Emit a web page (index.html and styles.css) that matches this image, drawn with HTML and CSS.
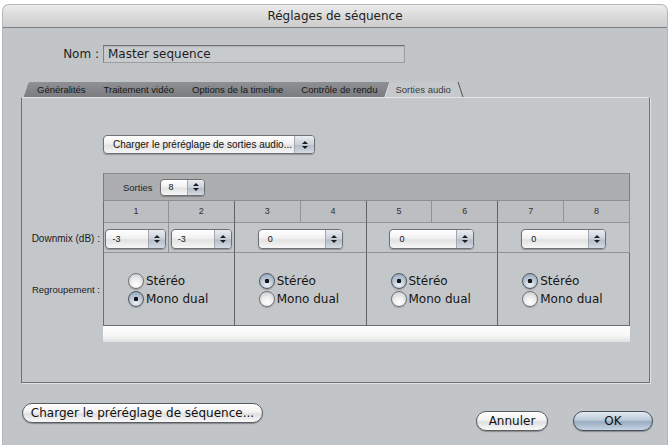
FILE: index.html
```html
<!DOCTYPE html>
<html lang="fr">
<head>
    <meta charset="UTF-8">
    <meta name="viewport" content="width=device-width, initial-scale=1.0">
    <title>Réglages de séquence</title>
    <link rel="stylesheet" href="styles.css">
</head>
<body>
    <div class="window">
        <div class="titlebar">Réglages de séquence</div>

        <div class="name-row">
            <label class="name-label">Nom :</label>
            <div class="name-field">Master sequence</div>
        </div>

        <div class="tabs">
            <div class="tab">Généralités</div>
            <div class="tab">Traitement vidéo</div>
            <div class="tab">Options de la timeline</div>
            <div class="tab">Contrôle de rendu</div>
            <div class="tab active">Sorties audio</div>
        </div>

        <div class="panel">
            <div class="preset-row">
                <div class="popup popup-preset">
                    <span class="popup-value">Charger le préréglage de sorties audio...</span>
                    <span class="popup-arrows"></span>
                </div>
            </div>

            <div class="outputs">
                <!-- header: number of outputs -->
                <div class="spacer"></div>
                <div class="outputs-head">
                    <span class="head-label">Sorties</span>
                    <div class="popup popup-count">
                        <span class="popup-value">8</span>
                        <span class="popup-arrows"></span>
                    </div>
                </div>

                <!-- channel numbers -->
                <div class="spacer"></div>
                <div class="channel first">1</div>
                <div class="channel group-end">2</div>
                <div class="channel">3</div>
                <div class="channel group-end">4</div>
                <div class="channel">5</div>
                <div class="channel group-end">6</div>
                <div class="channel">7</div>
                <div class="channel">8</div>

                <!-- downmix -->
                <div class="row-label">Downmix (dB) :</div>
                <div class="mix-cell first">
                    <div class="popup popup-mix"><span class="popup-value">-3</span><span class="popup-arrows"></span></div>
                </div>
                <div class="mix-cell group-end">
                    <div class="popup popup-mix"><span class="popup-value">-3</span><span class="popup-arrows"></span></div>
                </div>
                <div class="mix-cell pair group-end">
                    <div class="popup popup-mix wide"><span class="popup-value">0</span><span class="popup-arrows"></span></div>
                </div>
                <div class="mix-cell pair group-end">
                    <div class="popup popup-mix wide"><span class="popup-value">0</span><span class="popup-arrows"></span></div>
                </div>
                <div class="mix-cell pair">
                    <div class="popup popup-mix wide"><span class="popup-value">0</span><span class="popup-arrows"></span></div>
                </div>

                <!-- grouping -->
                <div class="row-label small">Regroupement :</div>
                <div class="group-cell first group-end">
                    <div class="radio">Stéréo</div>
                    <div class="radio checked">Mono dual</div>
                </div>
                <div class="group-cell group-end">
                    <div class="radio checked">Stéréo</div>
                    <div class="radio">Mono dual</div>
                </div>
                <div class="group-cell group-end">
                    <div class="radio checked">Stéréo</div>
                    <div class="radio">Mono dual</div>
                </div>
                <div class="group-cell">
                    <div class="radio checked">Stéréo</div>
                    <div class="radio">Mono dual</div>
                </div>

                <div class="spacer"></div>
                <div class="strip"></div>
            </div>
        </div>

        <div class="footer">
            <button class="pill preset-button">Charger le préréglage de séquence...</button>
            <div class="footer-actions">
                <button class="pill cancel">Annuler</button>
                <button class="pill default">OK</button>
            </div>
        </div>
    </div>
</body>
</html>
```

FILE: styles.css
```css
* {
    box-sizing: border-box;
}

body {
    margin: 0;
    background: #fff;
    font-family: "DejaVu Sans", sans-serif;
    color: #1e1e1e;
}

.window {
    margin: 5px 3px 0 3px;
    height: 440px;
    background: #c2c5c8;
    border-radius: 6px 6px 0 0;
    box-shadow: 0 0 0 1px #b4b6b8;
    overflow: hidden;
}

.titlebar {
    height: 23px;
    line-height: 22px;
    text-align: center;
    font-size: 12px;
    color: #222;
    background: linear-gradient(#ececec, #dadada 50%, #cdcdcd);
    border-bottom: 1px solid #7d7e80;
}

/* name */
.name-row {
    display: flex;
    align-items: center;
    margin-top: 17px;
}

.name-label {
    width: 100px;
    padding-right: 4px;
    text-align: right;
    font-size: 12px;
}

.name-field {
    width: 302px;
    height: 18px;
    padding-left: 4px;
    line-height: 16px;
    font-size: 12px;
    background: #c8cbce;
    border: 1px solid #9b9da0;
    border-top-color: #6f7173;
    border-left-color: #7f8183;
    box-shadow: inset 0 1px 1px rgba(0, 0, 0, 0.12);
}

/* tabs */
.tabs {
    position: relative;
    z-index: 0;
    display: flex;
    height: 15px;
    margin: 19px 0 0 25px;
}

.tab {
    position: relative;
    padding: 0 9px;
    line-height: 15px;
    font-family: "Liberation Sans", Arial, sans-serif;
    font-size: 9.5px;
    color: #161616;
    white-space: nowrap;
}

.tab::before {
    content: "";
    position: absolute;
    top: 0;
    bottom: 0;
    left: -2px;
    right: -2px;
    z-index: -1;
    background: linear-gradient(#8e9093, #7a7c7f);
    border-right: 1px solid #e2e3e4;
    transform: skewX(-18deg);
}

.tab:first-child::before {
    border-radius: 2px 0 0 0;
}

.tab.active {
    color: #3c3c3c;
}

.tab.active::before {
    left: 0;
    right: -4px;
    background: #c6c9cc;
    border-right: none;
    transform: none;
    clip-path: polygon(3px 0, calc(100% - 6px) 0, 100% 100%, 0 100%);
}

.tab.active::after {
    content: "";
    position: absolute;
    top: 0;
    bottom: 0;
    right: -1px;
    width: 1px;
    background: #4f5153;
    transform: skewX(18deg);
}

/* panel */
.panel {
    height: 286px;
    margin: 0 17px 0 18px;
    padding-top: 37px;
    background: #c4c7ca;
    border: 1px solid #6f7173;
    border-top-color: #e3e5e7;
    box-shadow: 1px 1px 0 #dfe1e3;
}

.preset-row {
    padding-left: 81px;
}

/* popup menus */
.popup {
    display: flex;
    background: linear-gradient(#ffffff, #f1f1f1 45%, #e2e2e2 55%, #f6f6f6);
    border: 1px solid #6e7072;
    border-radius: 4px;
    box-shadow: 0 1px 1px rgba(0, 0, 0, 0.25);
    font-family: "Liberation Sans", Arial, sans-serif;
    color: #111;
}

.popup-value {
    flex: 1;
    white-space: nowrap;
}

.popup-arrows {
    display: flex;
    flex-direction: column;
    align-items: center;
    justify-content: center;
    gap: 2px;
    width: 17px;
    border-left: 1px solid #a4a8ae;
    border-radius: 0 3px 3px 0;
    background: linear-gradient(#e9edf2, #c9d0d9 50%, #b4bdc9 55%, #d4dbe4);
}

.popup-arrows::before,
.popup-arrows::after {
    content: "";
    border-left: 3px solid transparent;
    border-right: 3px solid transparent;
}

.popup-arrows::before {
    border-bottom: 3px solid #1c1c1c;
}

.popup-arrows::after {
    border-top: 3px solid #1c1c1c;
}

.popup-preset {
    width: 212px;
    height: 19px;
    font-size: 10px;
    line-height: 17px;
}

.popup-preset .popup-value {
    padding-left: 9px;
}

.popup-preset .popup-arrows {
    width: 20px;
}

.popup-count {
    width: 45px;
    height: 17px;
    font-size: 9px;
    line-height: 15px;
}

.popup-count .popup-value {
    padding-left: 8px;
}

.popup-mix {
    width: 61px;
    height: 20px;
    font-size: 9px;
    line-height: 18px;
}

.popup-mix .popup-value {
    padding-left: 6px;
}

.popup-mix.wide {
    width: 85px;
}

.popup-mix.wide .popup-value {
    padding-left: 9px;
}

/* outputs table */
.outputs {
    display: grid;
    grid-template-columns: 81px repeat(8, 1fr);
    grid-template-rows: 28px 22px 30px 73px 16px;
    width: 608px;
    margin-top: 19px;
    font-family: "Liberation Sans", Arial, sans-serif;
}

.outputs-head {
    grid-column: span 8;
    display: flex;
    align-items: center;
    gap: 7px;
    padding-left: 19px;
    background: #adaeb0;
    border: 1px solid #7b7d7f;
    border-top-color: #8c8e90;
    border-bottom-color: #8c8e90;
}

.head-label {
    font-size: 9.5px;
    color: #222;
}

.channel {
    text-align: center;
    line-height: 21px;
    font-size: 9px;
    color: #333;
    background: #bcbec1;
    border-right: 1px solid #909294;
    border-bottom: 1px solid #909294;
}

.first {
    border-left: 1px solid #6c6e70;
}

.group-end {
    border-right-color: #5f6163 !important;
}

.row-label {
    display: flex;
    align-items: center;
    justify-content: flex-end;
    padding-right: 3px;
    font-size: 10px;
    color: #1a1a1a;
}

.row-label.small {
    font-size: 9.5px;
}

.mix-cell {
    display: flex;
    align-items: center;
    justify-content: center;
    padding-top: 3px;
    border-right: 1px solid #909294;
    border-bottom: 1px solid #909294;
}

.mix-cell.pair {
    grid-column: span 2;
}

.mix-cell:last-child {
    border-right-color: #6c6e70;
}

.group-cell {
    grid-column: span 2;
    display: flex;
    flex-direction: column;
    justify-content: center;
    padding: 2px 0 0 24px;
    border-right: 1px solid #6c6e70;
    border-bottom: 1px solid #6c6e70;
}

.radio {
    display: flex;
    align-items: center;
    gap: 2px;
    height: 18px;
    font-family: "DejaVu Sans", sans-serif;
    font-size: 12px;
    color: #151515;
}

.radio::before {
    content: "";
    width: 14px;
    height: 14px;
    border-radius: 50%;
    border: 1px solid #707274;
    background: radial-gradient(circle at 50% 75%, #ffffff, #ececec 45%, #c4c4c4);
    box-shadow: 0 1px 1px rgba(0, 0, 0, 0.2);
}

.radio.checked::before {
    border-color: #55595f;
    background: radial-gradient(circle, #161616 0 2px, transparent 2.6px),
        radial-gradient(circle at 50% 75%, #eef3f8, #b9c7d7 50%, #8497ae);
}

.strip {
    grid-column: span 8;
    background: linear-gradient(#fdfdfd, #f7f7f7 60%, #dedfe0);
}

/* footer buttons */
.footer {
    display: flex;
    justify-content: space-between;
    align-items: flex-start;
    padding: 20px 14px 0 19px;
}

.footer-actions {
    display: flex;
    gap: 25px;
    margin-top: 8px;
}

.pill {
    height: 20px;
    padding: 0;
    font-family: "DejaVu Sans", sans-serif;
    font-size: 12px;
    color: #111;
    background: linear-gradient(#ffffff, #f2f2f2 45%, #e0e0e0 55%, #f8f8f8);
    border: 1px solid #5b5d60;
    border-radius: 10px;
    box-shadow: 0 1px 1px rgba(0, 0, 0, 0.3);
}

.preset-button {
    width: 241px;
}

.cancel {
    width: 72px;
}

.default {
    width: 80px;
    border-color: #47505c;
    background: linear-gradient(#e4ebf3, #bcc9d8 45%, #9aacc2 55%, #c7d4e3);
}
```
